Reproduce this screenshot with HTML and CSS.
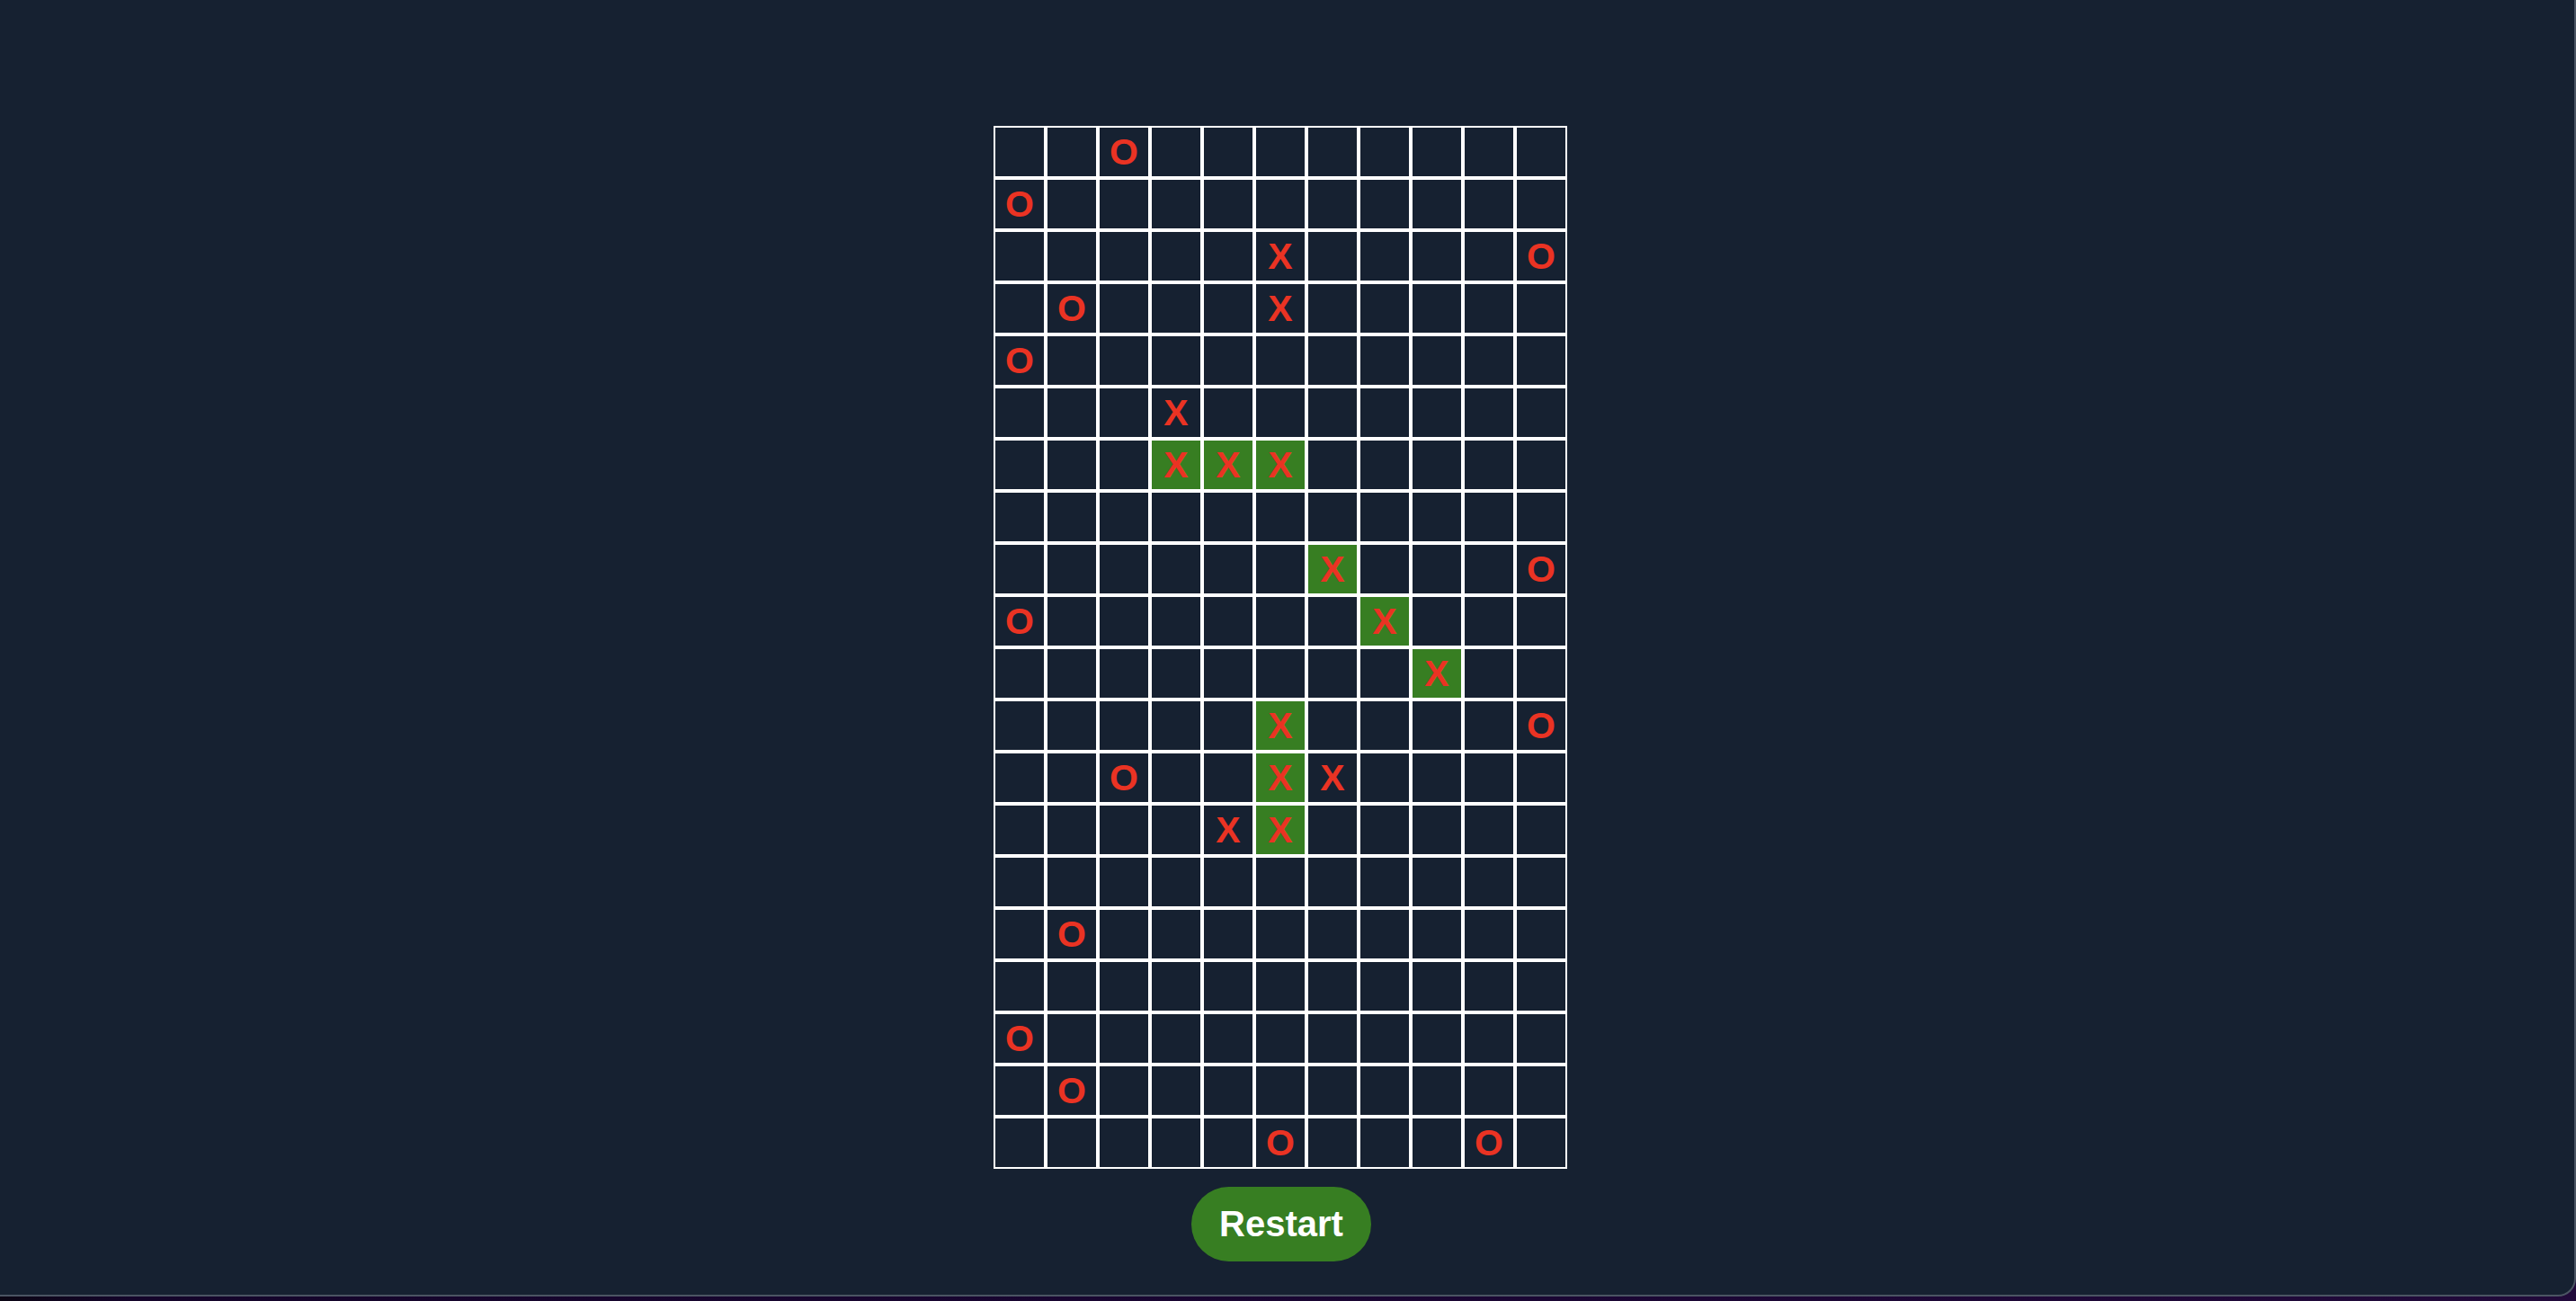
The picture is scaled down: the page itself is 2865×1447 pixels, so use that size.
FILE: index.html
```html
<!DOCTYPE html>
<html lang="en">
<head>
<meta charset="utf-8">
<title>Tic Tac Toe</title>
<link rel="stylesheet" href="styles.css">
</head>
<body>
<div class="window">
  <main class="game">
    <div class="board">
      <div class="cell"></div><div class="cell"></div><div class="cell">O</div><div class="cell"></div><div class="cell"></div><div class="cell"></div><div class="cell"></div><div class="cell"></div><div class="cell"></div><div class="cell"></div><div class="cell"></div>
      <div class="cell">O</div><div class="cell"></div><div class="cell"></div><div class="cell"></div><div class="cell"></div><div class="cell"></div><div class="cell"></div><div class="cell"></div><div class="cell"></div><div class="cell"></div><div class="cell"></div>
      <div class="cell"></div><div class="cell"></div><div class="cell"></div><div class="cell"></div><div class="cell"></div><div class="cell">X</div><div class="cell"></div><div class="cell"></div><div class="cell"></div><div class="cell"></div><div class="cell">O</div>
      <div class="cell"></div><div class="cell">O</div><div class="cell"></div><div class="cell"></div><div class="cell"></div><div class="cell">X</div><div class="cell"></div><div class="cell"></div><div class="cell"></div><div class="cell"></div><div class="cell"></div>
      <div class="cell">O</div><div class="cell"></div><div class="cell"></div><div class="cell"></div><div class="cell"></div><div class="cell"></div><div class="cell"></div><div class="cell"></div><div class="cell"></div><div class="cell"></div><div class="cell"></div>
      <div class="cell"></div><div class="cell"></div><div class="cell"></div><div class="cell">X</div><div class="cell"></div><div class="cell"></div><div class="cell"></div><div class="cell"></div><div class="cell"></div><div class="cell"></div><div class="cell"></div>
      <div class="cell"></div><div class="cell"></div><div class="cell"></div><div class="cell win">X</div><div class="cell win">X</div><div class="cell win">X</div><div class="cell"></div><div class="cell"></div><div class="cell"></div><div class="cell"></div><div class="cell"></div>
      <div class="cell"></div><div class="cell"></div><div class="cell"></div><div class="cell"></div><div class="cell"></div><div class="cell"></div><div class="cell"></div><div class="cell"></div><div class="cell"></div><div class="cell"></div><div class="cell"></div>
      <div class="cell"></div><div class="cell"></div><div class="cell"></div><div class="cell"></div><div class="cell"></div><div class="cell"></div><div class="cell win">X</div><div class="cell"></div><div class="cell"></div><div class="cell"></div><div class="cell">O</div>
      <div class="cell">O</div><div class="cell"></div><div class="cell"></div><div class="cell"></div><div class="cell"></div><div class="cell"></div><div class="cell"></div><div class="cell win">X</div><div class="cell"></div><div class="cell"></div><div class="cell"></div>
      <div class="cell"></div><div class="cell"></div><div class="cell"></div><div class="cell"></div><div class="cell"></div><div class="cell"></div><div class="cell"></div><div class="cell"></div><div class="cell win">X</div><div class="cell"></div><div class="cell"></div>
      <div class="cell"></div><div class="cell"></div><div class="cell"></div><div class="cell"></div><div class="cell"></div><div class="cell win">X</div><div class="cell"></div><div class="cell"></div><div class="cell"></div><div class="cell"></div><div class="cell">O</div>
      <div class="cell"></div><div class="cell"></div><div class="cell">O</div><div class="cell"></div><div class="cell"></div><div class="cell win">X</div><div class="cell">X</div><div class="cell"></div><div class="cell"></div><div class="cell"></div><div class="cell"></div>
      <div class="cell"></div><div class="cell"></div><div class="cell"></div><div class="cell"></div><div class="cell">X</div><div class="cell win">X</div><div class="cell"></div><div class="cell"></div><div class="cell"></div><div class="cell"></div><div class="cell"></div>
      <div class="cell"></div><div class="cell"></div><div class="cell"></div><div class="cell"></div><div class="cell"></div><div class="cell"></div><div class="cell"></div><div class="cell"></div><div class="cell"></div><div class="cell"></div><div class="cell"></div>
      <div class="cell"></div><div class="cell">O</div><div class="cell"></div><div class="cell"></div><div class="cell"></div><div class="cell"></div><div class="cell"></div><div class="cell"></div><div class="cell"></div><div class="cell"></div><div class="cell"></div>
      <div class="cell"></div><div class="cell"></div><div class="cell"></div><div class="cell"></div><div class="cell"></div><div class="cell"></div><div class="cell"></div><div class="cell"></div><div class="cell"></div><div class="cell"></div><div class="cell"></div>
      <div class="cell">O</div><div class="cell"></div><div class="cell"></div><div class="cell"></div><div class="cell"></div><div class="cell"></div><div class="cell"></div><div class="cell"></div><div class="cell"></div><div class="cell"></div><div class="cell"></div>
      <div class="cell"></div><div class="cell">O</div><div class="cell"></div><div class="cell"></div><div class="cell"></div><div class="cell"></div><div class="cell"></div><div class="cell"></div><div class="cell"></div><div class="cell"></div><div class="cell"></div>
      <div class="cell"></div><div class="cell"></div><div class="cell"></div><div class="cell"></div><div class="cell"></div><div class="cell">O</div><div class="cell"></div><div class="cell"></div><div class="cell"></div><div class="cell">O</div><div class="cell"></div>
    </div>
    <button class="restart" type="button">Restart</button>
  </main>
</div>
</body>
</html>
```

FILE: styles.css
```css
html, body {
  margin: 0;
  padding: 0;
  height: 100%;
}

body {
  background: linear-gradient(90deg, #0b0614 0%, #14052a 5%, #1a0633 60%, #210a3a 100%);
  font-family: "Liberation Sans", Arial, Helvetica, sans-serif;
  overflow: hidden;
}

.window {
  box-sizing: border-box;
  height: 1442px;
  width: 2865px;
  background: #162131;
  border-right: 2px solid #4b5563;
  border-bottom: 2px solid #4b5563;
  border-bottom-right-radius: 20px;
  padding: 140px 15px 0 0;
}

.game {
  display: flex;
  flex-direction: column;
  align-items: center;
  gap: 20px;
}

.board {
  display: grid;
  grid-template-columns: repeat(11, 58px);
  grid-auto-rows: 58px;
}

.cell {
  box-sizing: border-box;
  width: 58px;
  height: 58px;
  border: 2px solid #ffffff;
  display: flex;
  align-items: center;
  justify-content: center;
  color: #ea3323;
  font-size: 41px;
  font-weight: bold;
  line-height: 1;
}

.cell.win {
  background: #377e22;
}

.restart {
  box-sizing: border-box;
  width: 200px;
  height: 83px;
  margin-left: 2px;
  border: none;
  border-radius: 42px;
  background: #377e22;
  color: #ffffff;
  font-family: "Liberation Sans", Arial, Helvetica, sans-serif;
  font-size: 40px;
  font-weight: bold;
  padding: 0;
  cursor: pointer;
}
```
